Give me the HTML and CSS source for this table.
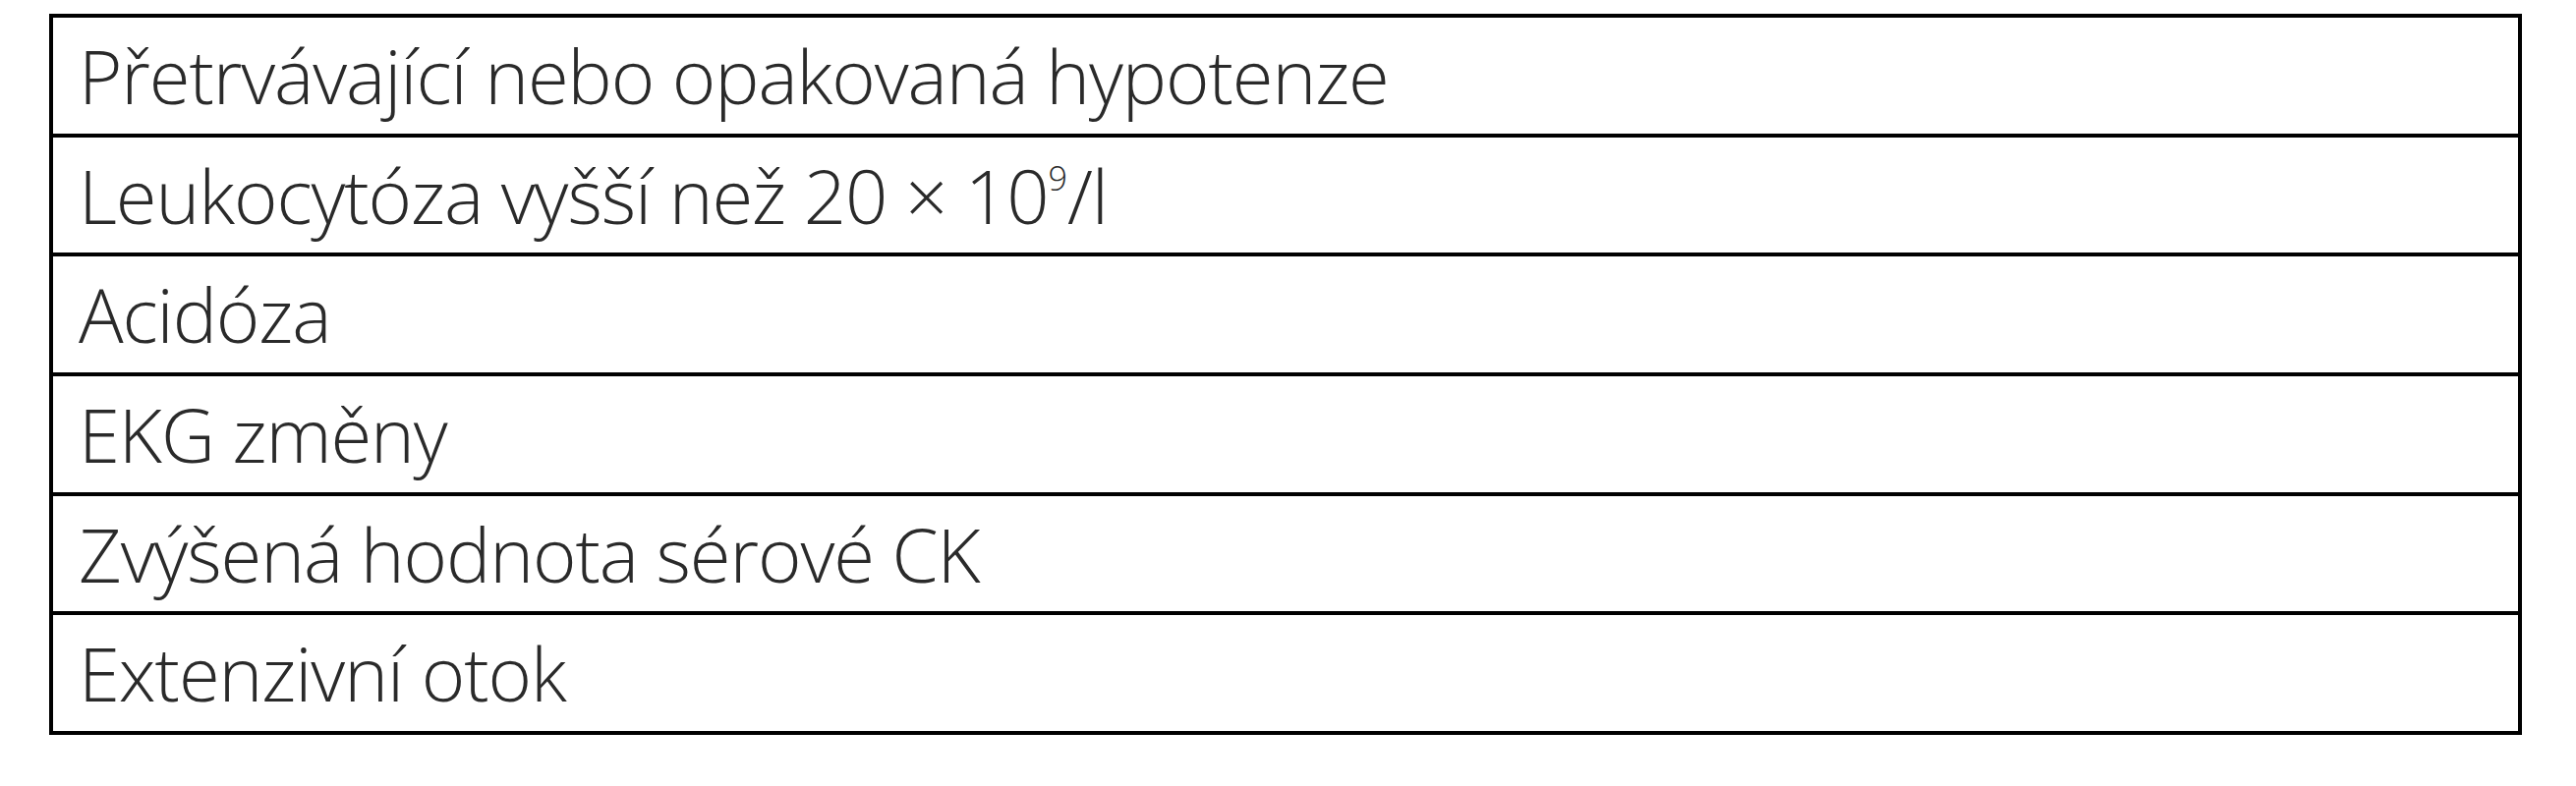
FILE: index.html
```html
<!DOCTYPE html>
<html lang="cs">
<head>
<meta charset="utf-8">
<title>Kritéria</title>
<link rel="stylesheet" href="styles.css">
</head>
<body>
<ul class="criteria">
  <li class="row">Přetrvávající nebo opakovaná hypotenze</li>
  <li class="row">Leukocytóza vyšší než 20 × 10<sup class="sup">9</sup>/l</li>
  <li class="row">Acidóza</li>
  <li class="row">EKG změny</li>
  <li class="row">Zvýšená hodnota sérové CK</li>
  <li class="row">Extenzivní otok</li>
</ul>
</body>
</html>
```
FILE: styles.css
```css
html, body {
  margin: 0;
  padding: 0;
  background: #ffffff;
}

.criteria {
  list-style: none;
  margin: 14px 0 0 50px;
  padding: 0;
  width: 2516px;
  box-sizing: border-box;
  border: 4px solid #000000;
  display: flex;
  flex-direction: column;
}

.row {
  height: 117.67px;
  line-height: 117.67px;
  border-top: 4px solid #000000;
  padding-left: 26px;
  font-family: "Open Sans", "Noto Sans", sans-serif;
  font-size: 76px;
  font-weight: 300;
  letter-spacing: -1.1px;
  color: #2a2a2a;
  white-space: nowrap;
}

.row:first-child {
  border-top: 0;
}

.sup {
  font-size: 0.45em;
  line-height: 0;
  letter-spacing: 0;
  vertical-align: 34px;
}
```
